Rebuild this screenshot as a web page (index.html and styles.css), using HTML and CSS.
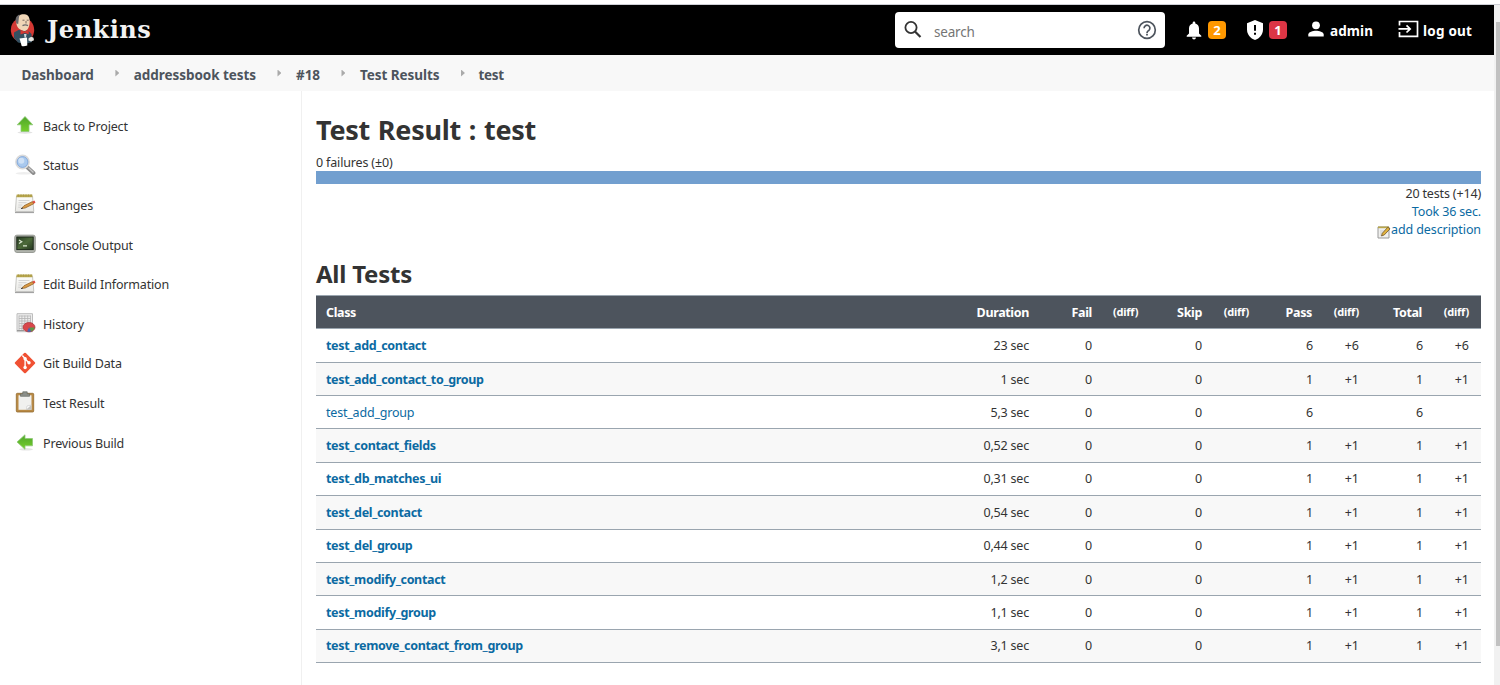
FILE: index.html
```html
<!DOCTYPE html>
<html lang="en">
<head>
<meta charset="utf-8">
<title>Test Result : test [Jenkins]</title>
<link rel="stylesheet" href="styles.css">
</head>
<body>
<svg class="defs" aria-hidden="true">
  <defs>
    <linearGradient id="green" x1="0" y1="0" x2="0" y2="1"><stop offset="0" stop-color="#4fa52c"/><stop offset="1" stop-color="#76cf2c"/></linearGradient>
    <linearGradient id="screen" x1="0" y1="0" x2="1" y2="1"><stop offset="0" stop-color="#273b24"/><stop offset=".5" stop-color="#4d6b3a"/><stop offset="1" stop-color="#243620"/></linearGradient>
    <linearGradient id="paper" x1="0" y1="0" x2="0" y2="1"><stop offset="0" stop-color="#fdfdfb"/><stop offset="1" stop-color="#e9e9e6"/></linearGradient>
  </defs>
  <symbol id="notepad" viewBox="0 0 22 22">
    <path d="M2.500 3h16l1.300 15.500H1.300z" fill="url(#paper)" stroke="#b9b9b5" stroke-width=".8"/>
    <path d="M1 19.600h19" stroke="#999" stroke-width="1"/>
    <path d="M2.700 1.400h15.600v2.800H2.400z" fill="#b8a74e"/>
    <path d="M4.500 1.300v2.500M7 1.300v2.500M9.500 1.300v2.500M12 1.300v2.500M14.500 1.300v2.500M17 1.300v2.500" stroke="#a29242" stroke-width=".6"/>
    <path d="M4.500 7.500h11M4.500 9.700h8M4.300 12h4M4.200 14.200h3" stroke="#cfcfcf" stroke-width=".9"/>
    <path d="M7.500 15.400 10 12.700 18.400 8.600 19.800 10.700 11.200 15z" fill="#d99a45" stroke="#8a5a21" stroke-width=".7"/>
    <path d="M7 15.700 9 14.900" stroke="#444" stroke-width="1"/>
    <path d="M18.300 8.700 20.300 7.600 21.500 9.500 19.700 10.700z" fill="#dc4b3e"/>
  </symbol>
</svg>

<div class="topline"></div>
<div class="viewport">
  <div class="page">
    <header class="header">
      <a class="logo">
        <svg class="mascot" viewBox="0 0 26 34">
          <ellipse cx="12.500" cy="17" rx="11.700" ry="12.300" fill="#d33833"/>
          <path d="M4 19.500 8.500 17 18 17.500 21.500 21 22 29 15 31 8 29.500 4 25z" fill="#335061"/>
          <path d="M6.500 7C7 2.500 11 .8 14.500 1.200 18.500 1.600 20 5 19.700 9c-.2 5-2.300 9-5.200 9-4-.3-7.700-3.500-8-7z" fill="#f0d6b7"/>
          <path d="M6.500 10.500C4.500 6.500 6 2.800 9.500 1.500L8.800 5.500 8.200 11z" fill="#6d6b6d"/>
          <path d="M12.500 7.200h2M16.700 7.200h2M16 8v2.500" stroke="#6b5d55" stroke-width=".9" fill="none"/>
          <path d="M12.500 12.600q2.700-1.600 5.500 0" stroke="#6d6b6d" stroke-width="1.300" fill="none"/>
          <path d="m10.500 16.800 4 1.700 4.200-1.700v4.400l-3.800-1.300-4.400 1.500z" fill="#d33833"/>
          <path d="M14 21h2.500l-.5 3.500h-1.500z" fill="#cfd6da"/>
          <path d="M9.500 25.400 17 24.600 17.300 32.600q-3.500 1.200-5.600.4z" fill="#fff"/>
          <path d="M18.500 25.500q3-2.500 5-.8l.5 2.500-3 1.300-2.500-1z" fill="#e7e4df"/>
        </svg>
        <span class="wordmark">Jenkins</span>
      </a>
      <div class="search">
        <svg class="lens" viewBox="0 0 20 20"><circle cx="8" cy="7.500" r="5.600" fill="none" stroke="#333" stroke-width="1.800"/><path d="m12 11.500 5.500 5.500" stroke="#333" stroke-width="2.200"/></svg>
        <span class="search-text">search</span>
        <svg class="help" viewBox="0 0 20 20"><circle cx="10" cy="10" r="8.300" fill="none" stroke="#4d545d" stroke-width="1.700"/><path d="M7.100 8.200a2.900 2.900 0 1 1 4.800 2.100c-1.100.9-1.900 1.300-1.900 2.600" fill="none" stroke="#4d545d" stroke-width="1.700"/><path d="M9.100 13.800h1.800v1.800H9.100z" fill="#4d545d"/></svg>
      </div>
      <div class="alert bell">
        <svg width="16" height="19" viewBox="0 0 16 19"><path d="M8 .5c.8 0 1.300.6 1.300 1.400v.5C11.700 3 13 5 13 7.500v5l2.300 2.300v.9H.7v-.9L3 12.500v-5C3 5 4.300 3 6.700 2.400v-.5C6.700 1.100 7.200.5 8 .5zM6 16.600h4q-.2 1.900-2 1.900t-2-1.900z" fill="#fff"/></svg>
        <span class="badge orange">2</span>
      </div>
      <div class="alert shield">
        <svg width="18" height="20" viewBox="0 0 18 20"><path d="M9 0 17 3.200V9.500c0 5-3.400 9-8 10.500C4.400 18.500 1 14.500 1 9.500V3.200z" fill="#fff"/><path d="M9 5v5.700M9 12.700v2.100" stroke="#000" stroke-width="2"/></svg>
        <span class="badge red">1</span>
      </div>
      <a class="user"><svg width="16" height="16" viewBox="0 0 16 16"><circle cx="8" cy="4.300" r="3.900" fill="#fff"/><path d="M.3 15.500v-2C.3 10.900 5 9.700 8 9.700s7.700 1.200 7.700 3.800v2z" fill="#fff"/></svg>admin</a>
      <a class="logout"><svg width="21" height="18" viewBox="0 0 21 18"><path d="M1.500 5.500V1.500h18v14.800h-18V12M.5 8.900h11M8.500 5.300l3.700 3.600-3.700 3.600" fill="none" stroke="#fff" stroke-width="1.700"/></svg>log out</a>
    </header>

    <nav class="crumbs">
      <a>Dashboard</a><i></i><a>addressbook tests</a><i></i><a>#18</a><i></i><a>Test Results</a><i></i><a>test</a>
    </nav>

    <div class="body">
      <aside class="side">
        <a class="task"><svg viewBox="0 0 22 22"><ellipse cx="11" cy="18.500" rx="7.500" ry="1.200" fill="#e2e2e2"/><path d="M11 2.500 18.800 10.800H15v6.700H7v-6.700H3.200z" fill="url(#green)" stroke="#8fc979" stroke-width=".8"/></svg>Back to Project</a>
        <a class="task"><svg viewBox="0 0 22 22"><ellipse cx="10" cy="19.300" rx="8.500" ry="1.300" fill="#eee"/><path d="m13.500 13.500 6 5.500" stroke="#8c8c8c" stroke-width="3.800" stroke-linecap="round"/><path d="m14.500 13.800 5 4.700" stroke="#c9c9c9" stroke-width="1.300"/><circle cx="8.500" cy="8" r="6.400" fill="#a9c9ee" stroke="#dadada" stroke-width="2"/><circle cx="8.500" cy="8" r="5.400" fill="none" stroke="#7fa7dc" stroke-width=".9"/><circle cx="7.300" cy="6.800" r="3" fill="#cfe1f6"/></svg>Status</a>
        <a class="task"><svg><use href="#notepad"/></svg>Changes</a>
        <a class="task"><svg viewBox="0 0 22 22"><rect x=".8" y="2.200" width="20.400" height="17.200" rx="2" fill="#b4b7b0" stroke="#92958e"/><rect x="2.800" y="4" width="16.400" height="12.600" fill="url(#screen)" stroke="#1e2a1b"/><path d="m5 7 2.800 1.800L5 10.600M9 12.800h4" fill="none" stroke="#dce8d2" stroke-width="1.200"/></svg>Console Output</a>
        <a class="task"><svg><use href="#notepad"/></svg>Edit Build Information</a>
        <a class="task"><svg viewBox="0 0 22 22"><path d="M3 1.700h15.500v18H3z" fill="#eee" stroke="#bdbdbd"/><path d="M5 4h11.500M5 6.500h11.500M5 9h11.500M5 11.500h9M5 14h5M5 16.500h4M5 3.500v14.500M7.900 3.500v14.500M10.800 3.500v10M13.700 3.500v8M16.500 3.500v8" stroke="#b4b4b4" stroke-width=".8"/><path d="M3 18.500h7" stroke="#999"/><ellipse cx="15" cy="15.200" rx="6" ry="4.700" fill="#d9474b" stroke="#a33236" stroke-width=".7"/><path d="M15 15.500h5.700q-.5 3-3.500 4z" fill="#5b9a48"/><path d="m15 15.500 2.200 4q-2 .6-4 .1z" fill="#4468b4"/></svg>History</a>
        <a class="task"><svg viewBox="0 0 22 22"><rect x="3.400" y="3.400" width="15.200" height="15.200" rx="1.200" transform="rotate(45 11 11)" fill="#f05133"/><path d="m8.300 3.500 2.800 3M11.100 6.500v9M11.300 7l3.500 3.700" stroke="#fff" stroke-width="1.400" fill="none"/><g fill="#fff"><circle cx="11.100" cy="6.800" r="1.700"/><circle cx="15" cy="10.800" r="1.700"/><circle cx="11.100" cy="15.500" r="1.700"/></g></svg>Git Build Data</a>
        <a class="task"><svg viewBox="0 0 22 22"><rect x="2.300" y="2.300" width="17.400" height="18.700" rx="1" fill="#b98a45" stroke="#93692d" stroke-width=".8"/><path d="M4.500 4.300h13v14.500h-13z" fill="#f0f0ee"/><path d="M12.500 18.800 17.500 14v4.800z" fill="#c4c4c1"/><path d="M12.300 18.800 13 15l4.500-1z" fill="#fff" stroke="#bbb" stroke-width=".5"/><path d="M6.500 5.300V2.800h2.300V.8h4.400v2h2.300v2.500z" fill="#8b8f89" stroke="#666a64" stroke-width=".7"/></svg>Test Result</a>
        <a class="task"><svg viewBox="0 0 22 22"><ellipse cx="12" cy="18.300" rx="7" ry="1.200" fill="#e5e5e5"/><path d="M3 11 11 3.800V7.500h7.500v7.300H11v3.500z" fill="url(#green)" stroke="#8fc979" stroke-width=".8"/></svg>Previous Build</a>
      </aside>

      <main class="main">
        <h1>Test Result : test</h1>
        <div class="line first">0 failures (±0)</div>
        <div class="bar"></div>
        <div class="line right total">20 tests (+14)</div>
        <div class="line right"><a>Took 36 sec.</a></div>
        <div class="line right desc"><svg width="14" height="14" viewBox="0 0 14 14"><path d="M1 2h11v11H1z" fill="#f0f0ee" stroke="#999"/><path d="M1 1.500h11v1.700H1z" fill="#b9a64b"/><path d="M3 6h5M3 8h3M3 10h2" stroke="#ccc"/><path d="m4.500 11 .8-2.700L10.800 2.200l2.200 1.700-5.700 6z" fill="#e3b33c" stroke="#6e5730" stroke-width=".8"/></svg><a>add description</a></div>
        <h2>All Tests</h2>
        <table class="tests">
          <colgroup><col><col class="c-dur"><col class="c-fail"><col class="c-diff1"><col class="c-n"><col class="c-diff"><col class="c-n2"><col class="c-diff"><col class="c-n2"><col class="c-diff"></colgroup>
          <thead><tr><th>Class</th><th>Duration</th><th>Fail</th><th class="d">(diff)</th><th>Skip</th><th class="d">(diff)</th><th>Pass</th><th class="d">(diff)</th><th>Total</th><th class="d">(diff)</th></tr></thead>
          <tbody>
            <tr><td><b>test_add_contact</b></td><td>23 sec</td><td>0</td><td></td><td>0</td><td></td><td>6</td><td>+6</td><td>6</td><td>+6</td></tr>
            <tr><td><b>test_add_contact_to_group</b></td><td>1 sec</td><td>0</td><td></td><td>0</td><td></td><td>1</td><td>+1</td><td>1</td><td>+1</td></tr>
            <tr><td><a>test_add_group</a></td><td>5,3 sec</td><td>0</td><td></td><td>0</td><td></td><td>6</td><td></td><td>6</td><td></td></tr>
            <tr><td><b>test_contact_fields</b></td><td>0,52 sec</td><td>0</td><td></td><td>0</td><td></td><td>1</td><td>+1</td><td>1</td><td>+1</td></tr>
            <tr><td><b>test_db_matches_ui</b></td><td>0,31 sec</td><td>0</td><td></td><td>0</td><td></td><td>1</td><td>+1</td><td>1</td><td>+1</td></tr>
            <tr><td><b>test_del_contact</b></td><td>0,54 sec</td><td>0</td><td></td><td>0</td><td></td><td>1</td><td>+1</td><td>1</td><td>+1</td></tr>
            <tr><td><b>test_del_group</b></td><td>0,44 sec</td><td>0</td><td></td><td>0</td><td></td><td>1</td><td>+1</td><td>1</td><td>+1</td></tr>
            <tr><td><b>test_modify_contact</b></td><td>1,2 sec</td><td>0</td><td></td><td>0</td><td></td><td>1</td><td>+1</td><td>1</td><td>+1</td></tr>
            <tr><td><b>test_modify_group</b></td><td>1,1 sec</td><td>0</td><td></td><td>0</td><td></td><td>1</td><td>+1</td><td>1</td><td>+1</td></tr>
            <tr><td><b>test_remove_contact_from_group</b></td><td>3,1 sec</td><td>0</td><td></td><td>0</td><td></td><td>1</td><td>+1</td><td>1</td><td>+1</td></tr>
          </tbody>
        </table>
      </main>
    </div>
  </div>
  <div class="scrollbar"><div class="thumb"></div></div>
</div>
</body>
</html>
```
FILE: styles.css
```css
* { box-sizing: border-box; }
body {
  margin: 0;
  height: 685px;
  overflow: hidden;
  background: #fff;
  color: #333;
  font: 12.5px/18px "Noto Sans", "Open Sans", sans-serif;
  letter-spacing: -0.16px;
}
svg { display: block; flex: none; }
.defs { width: 0; height: 0; position: absolute; }
.topline { height: 5px; border-bottom: 1px solid #ced0d6; }
.viewport { display: flex; height: 680px; }
.page { width: 1494px; display: flex; flex-direction: column; }

/* Scrollbar */
.scrollbar { width: 6px; background: #f1f1f1; padding: 17px 0 0 2px; }
.thumb { height: 624px; background: #c1c1c1; }

/* Header */
.header { height: 50px; background: #000; display: flex; align-items: center; color: #fff; }
.logo { display: flex; align-items: center; padding-left: 10px; width: 895px; }
.mascot { width: 26px; height: 34px; }
.wordmark { margin: -1px 0 0 11px; font: bold 24px/30px "DejaVu Serif", serif; letter-spacing: 0.5px; color: #f2f2f2; }
.search { width: 270px; height: 36px; background: #fff; border-radius: 4px; display: flex; align-items: center; padding: 0 8px 0 8px; }
.lens { width: 20px; height: 20px; }
.search-text { flex: 1; margin: 3px 0 0 11px; font-size: 13.5px; letter-spacing: -0.2px; color: #757575; }
.help { width: 20px; height: 20px; }
.alert { display: flex; align-items: center; }
.bell { margin-left: 21px; }
.shield { margin-left: 20px; }
.badge { width: 18px; height: 18px; border-radius: 4px; font: bold 13px/19px "Noto Sans", sans-serif; text-align: center; letter-spacing: 0; }
.bell .badge { margin-left: 6px; }
.shield .badge { margin-left: 5px; }
.orange { background: #ff9800; }
.red { background: #dc3545; }
.user, .logout { display: flex; align-items: center; font-weight: 700; font-size: 13.5px; letter-spacing: 0; padding-top: 2px; }
.user { margin-left: 21px; gap: 6px; letter-spacing: 0.1px; }
.logout { margin-left: 25px; gap: 4px; letter-spacing: 0.2px; }
.user svg, .logout svg { margin-top: -4px; }

/* Breadcrumbs */
.crumbs { height: 36px; background: #f8f8f8; display: flex; align-items: center; padding: 3px 0 0 21.5px; font-weight: 700; font-size: 13.5px; color: #4d545d; letter-spacing: -0.06px; }
.crumbs i { width: 4px; height: 7px; margin: -3px 14.5px 0 21.500px; background: #aaa; clip-path: polygon(0 0, 100% 50%, 0 100%); }
.crumbs a:last-child { letter-spacing: -0.3px; margin-left: -1px; }

/* Layout */
.body { flex: 1; display: flex; }
.side { width: 302px; border-right: 1px solid #f0f0f0; padding: 16px 0 0 14px; }
.task { display: flex; align-items: center; height: 39.6px; gap: 7px; }
.task svg { width: 22px; height: 22px; margin-top: -3px; }
.main { width: 1179px; padding: 19px 0 0 14px; }
h1 { margin: 0 0 3px; font: bold 27px/40px "Noto Sans", sans-serif; letter-spacing: -0.25px; word-spacing: 1px; }
h2 { margin: 17px 0 3px; font: bold 24px/36px "Noto Sans", sans-serif; letter-spacing: -0.24px; }
.bar { height: 13px; background: #729fcf; }
.first { padding-top: 1px; line-height: 17px; }
.total { padding-top: 1px; height: 19px; }
.right { text-align: right; }
.desc { display: flex; justify-content: flex-end; align-items: center; letter-spacing: -0.1px; }
.desc svg { margin-top: 3px; }
.line a, td a, td b { color: #0b6aa2; }

/* Results table */
.tests { width: 100%; table-layout: fixed; border-collapse: separate; border-spacing: 0; }
.c-dur { width: 100px; }
.c-fail { width: 63px; }
.c-diff1 { width: 47px; }
.c-n { width: 63px; }
.c-diff { width: 48px; }
.c-n2 { width: 62px; }
.tests th, .tests td { padding: 1px 11px 0 10px; text-align: right; height: 33.4px; border-bottom: 1px solid #9aa5af; white-space: nowrap; }
.tests th:first-child, .tests td:first-child { text-align: left; }
.tests th { height: 34px; background: #4d545d; color: #fff; border-top: 1px solid #9aa5af; letter-spacing: -0.35px; }
.tests th.d { font-size: 11px; letter-spacing: -0.25px; padding-right: 12px; padding-top: 0; }
.tests td { letter-spacing: -0.2px; }
.tests td:nth-child(8), .tests td:nth-child(10) { padding-right: 12px; letter-spacing: 0; }
.tests td:nth-child(7), .tests td:nth-child(9) { padding-right: 10px; }
.tests td b { letter-spacing: -0.33px; }
.tests tbody tr:nth-child(even) { background: #f8f8f8; }
.tests tbody tr:first-child td { height: 34px; }
.tests tbody tr:nth-child(2) td { height: 33px; }
```
